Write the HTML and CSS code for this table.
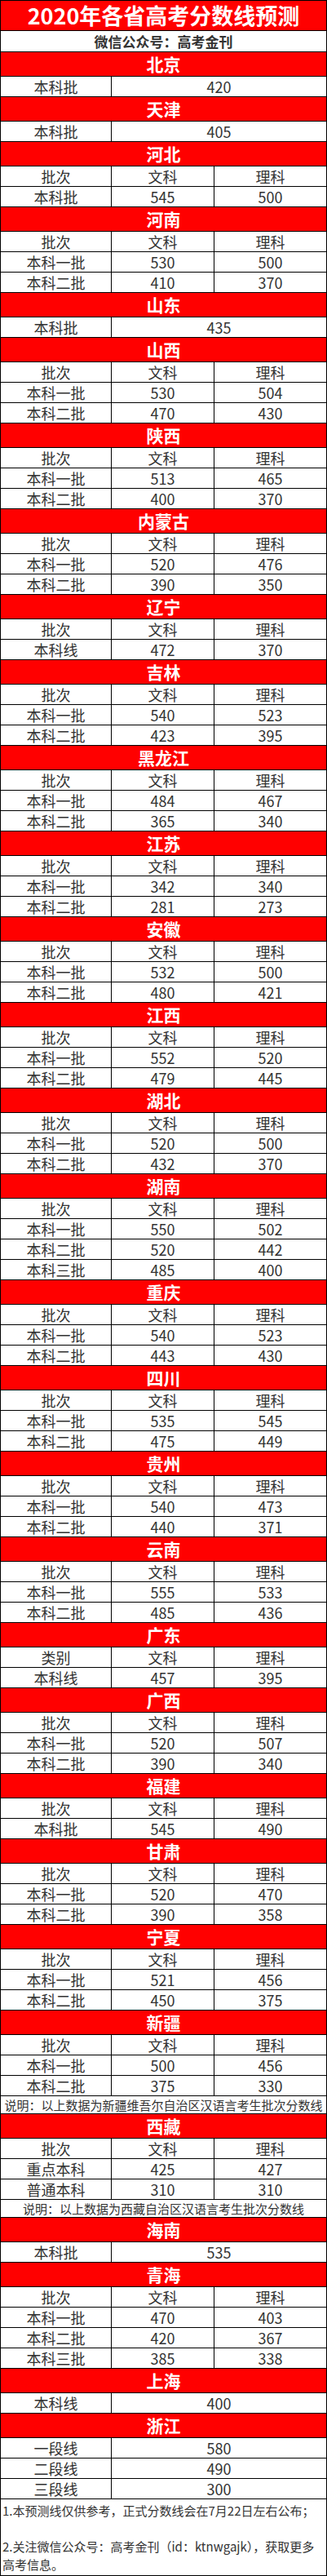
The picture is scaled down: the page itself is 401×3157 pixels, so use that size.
FILE: index.html
```html
<!DOCTYPE html>
<html lang="zh-CN">
<head>
<meta charset="utf-8">
<title>2020年各省高考分数线预测</title>
<link rel="stylesheet" href="styles.css">
</head>
<body>
<div class="sheet">
  <div class="title">2020年各省高考分数线预测</div>
  <div class="subtitle">微信公众号：高考金刊</div>

  <div class="prov">北京</div>
  <div class="row two"><span>本科批</span><span>420</span></div>

  <div class="prov">天津</div>
  <div class="row two"><span>本科批</span><span>405</span></div>

  <div class="prov">河北</div>
  <div class="row"><span>批次</span><span>文科</span><span>理科</span></div>
  <div class="row"><span>本科批</span><span>545</span><span>500</span></div>

  <div class="prov">河南</div>
  <div class="row"><span>批次</span><span>文科</span><span>理科</span></div>
  <div class="row"><span>本科一批</span><span>530</span><span>500</span></div>
  <div class="row"><span>本科二批</span><span>410</span><span>370</span></div>

  <div class="prov">山东</div>
  <div class="row two"><span>本科批</span><span>435</span></div>

  <div class="prov">山西</div>
  <div class="row"><span>批次</span><span>文科</span><span>理科</span></div>
  <div class="row"><span>本科一批</span><span>530</span><span>504</span></div>
  <div class="row"><span>本科二批</span><span>470</span><span>430</span></div>

  <div class="prov">陕西</div>
  <div class="row"><span>批次</span><span>文科</span><span>理科</span></div>
  <div class="row"><span>本科一批</span><span>513</span><span>465</span></div>
  <div class="row"><span>本科二批</span><span>400</span><span>370</span></div>

  <div class="prov">内蒙古</div>
  <div class="row"><span>批次</span><span>文科</span><span>理科</span></div>
  <div class="row"><span>本科一批</span><span>520</span><span>476</span></div>
  <div class="row"><span>本科二批</span><span>390</span><span>350</span></div>

  <div class="prov">辽宁</div>
  <div class="row"><span>批次</span><span>文科</span><span>理科</span></div>
  <div class="row"><span>本科线</span><span>472</span><span>370</span></div>

  <div class="prov">吉林</div>
  <div class="row"><span>批次</span><span>文科</span><span>理科</span></div>
  <div class="row"><span>本科一批</span><span>540</span><span>523</span></div>
  <div class="row"><span>本科二批</span><span>423</span><span>395</span></div>

  <div class="prov">黑龙江</div>
  <div class="row"><span>批次</span><span>文科</span><span>理科</span></div>
  <div class="row"><span>本科一批</span><span>484</span><span>467</span></div>
  <div class="row"><span>本科二批</span><span>365</span><span>340</span></div>

  <div class="prov">江苏</div>
  <div class="row"><span>批次</span><span>文科</span><span>理科</span></div>
  <div class="row"><span>本科一批</span><span>342</span><span>340</span></div>
  <div class="row"><span>本科二批</span><span>281</span><span>273</span></div>

  <div class="prov">安徽</div>
  <div class="row"><span>批次</span><span>文科</span><span>理科</span></div>
  <div class="row"><span>本科一批</span><span>532</span><span>500</span></div>
  <div class="row"><span>本科二批</span><span>480</span><span>421</span></div>

  <div class="prov">江西</div>
  <div class="row"><span>批次</span><span>文科</span><span>理科</span></div>
  <div class="row"><span>本科一批</span><span>552</span><span>520</span></div>
  <div class="row"><span>本科二批</span><span>479</span><span>445</span></div>

  <div class="prov">湖北</div>
  <div class="row"><span>批次</span><span>文科</span><span>理科</span></div>
  <div class="row"><span>本科一批</span><span>520</span><span>500</span></div>
  <div class="row"><span>本科二批</span><span>432</span><span>370</span></div>

  <div class="prov">湖南</div>
  <div class="row"><span>批次</span><span>文科</span><span>理科</span></div>
  <div class="row"><span>本科一批</span><span>550</span><span>502</span></div>
  <div class="row"><span>本科二批</span><span>520</span><span>442</span></div>
  <div class="row"><span>本科三批</span><span>485</span><span>400</span></div>

  <div class="prov">重庆</div>
  <div class="row"><span>批次</span><span>文科</span><span>理科</span></div>
  <div class="row"><span>本科一批</span><span>540</span><span>523</span></div>
  <div class="row"><span>本科二批</span><span>443</span><span>430</span></div>

  <div class="prov">四川</div>
  <div class="row"><span>批次</span><span>文科</span><span>理科</span></div>
  <div class="row"><span>本科一批</span><span>535</span><span>545</span></div>
  <div class="row"><span>本科二批</span><span>475</span><span>449</span></div>

  <div class="prov">贵州</div>
  <div class="row"><span>批次</span><span>文科</span><span>理科</span></div>
  <div class="row"><span>本科一批</span><span>540</span><span>473</span></div>
  <div class="row"><span>本科二批</span><span>440</span><span>371</span></div>

  <div class="prov">云南</div>
  <div class="row"><span>批次</span><span>文科</span><span>理科</span></div>
  <div class="row"><span>本科一批</span><span>555</span><span>533</span></div>
  <div class="row"><span>本科二批</span><span>485</span><span>436</span></div>

  <div class="prov">广东</div>
  <div class="row"><span>类别</span><span>文科</span><span>理科</span></div>
  <div class="row"><span>本科线</span><span>457</span><span>395</span></div>

  <div class="prov">广西</div>
  <div class="row"><span>批次</span><span>文科</span><span>理科</span></div>
  <div class="row"><span>本科一批</span><span>520</span><span>507</span></div>
  <div class="row"><span>本科二批</span><span>390</span><span>340</span></div>

  <div class="prov">福建</div>
  <div class="row"><span>批次</span><span>文科</span><span>理科</span></div>
  <div class="row"><span>本科批</span><span>545</span><span>490</span></div>

  <div class="prov">甘肃</div>
  <div class="row"><span>批次</span><span>文科</span><span>理科</span></div>
  <div class="row"><span>本科一批</span><span>520</span><span>470</span></div>
  <div class="row"><span>本科二批</span><span>390</span><span>358</span></div>

  <div class="prov">宁夏</div>
  <div class="row"><span>批次</span><span>文科</span><span>理科</span></div>
  <div class="row"><span>本科一批</span><span>521</span><span>456</span></div>
  <div class="row"><span>本科二批</span><span>450</span><span>375</span></div>

  <div class="prov">新疆</div>
  <div class="row"><span>批次</span><span>文科</span><span>理科</span></div>
  <div class="row"><span>本科一批</span><span>500</span><span>456</span></div>
  <div class="row"><span>本科二批</span><span>375</span><span>330</span></div>
  <div class="remark">说明：以上数据为新疆维吾尔自治区汉语言考生批次分数线</div>

  <div class="prov">西藏</div>
  <div class="row"><span>批次</span><span>文科</span><span>理科</span></div>
  <div class="row"><span>重点本科</span><span>425</span><span>427</span></div>
  <div class="row"><span>普通本科</span><span>310</span><span>310</span></div>
  <div class="remark">说明：以上数据为西藏自治区汉语言考生批次分数线</div>

  <div class="prov">海南</div>
  <div class="row two"><span>本科批</span><span>535</span></div>

  <div class="prov">青海</div>
  <div class="row"><span>批次</span><span>文科</span><span>理科</span></div>
  <div class="row"><span>本科一批</span><span>470</span><span>403</span></div>
  <div class="row"><span>本科二批</span><span>420</span><span>367</span></div>
  <div class="row"><span>本科三批</span><span>385</span><span>338</span></div>

  <div class="prov">上海</div>
  <div class="row two"><span>本科线</span><span>400</span></div>

  <div class="prov">浙江</div>
  <div class="row two"><span>一段线</span><span>580</span></div>
  <div class="row two"><span>二段线</span><span>490</span></div>
  <div class="row two"><span>三段线</span><span>300</span></div>

  <div class="footnote">
    <p>1.本预测线仅供参考，正式分数线会在7月22日左右公布；</p>
    <p>2.关注微信公众号：高考金刊（id：ktnwgajk），获取更多高考信息。</p>
  </div>
</div>
</body>
</html>
```

FILE: styles.css
```css
* {
  box-sizing: content-box;
}

html, body {
  margin: 0;
  padding: 0;
  background: #fff;
}

body {
  font-family: "Noto Sans CJK SC", "Microsoft YaHei", sans-serif;
  color: #333;
}

.sheet {
  width: 399px;
  border: 1px solid #000;
}

.title {
  height: 36px;
  line-height: 36px;
  background: #ff0000;
  color: #fff;
  font-size: 27px;
  font-weight: 700;
  text-align: center;
  border-bottom: 1px solid #000;
  white-space: nowrap;
}

.subtitle {
  height: 25px;
  line-height: 25px;
  font-size: 17px;
  font-weight: 700;
  color: #333;
  text-align: center;
  border-bottom: 1px solid #000;
}

.prov {
  height: 29px;
  line-height: 29px;
  background: #ff0000;
  color: #fff;
  font-size: 21px;
  font-weight: 700;
  text-align: center;
  border-bottom: 1px solid #000;
}

.row {
  display: grid;
  grid-template-columns: 135px 126px 138px;
  height: 24px;
  line-height: 24px;
  font-size: 18px;
  text-align: center;
  border-bottom: 1px solid #000;
}

.row.two {
  grid-template-columns: 135px 264px;
}

.row span {
  display: block;
  box-sizing: border-box;
  white-space: nowrap;
}

.row span + span {
  border-left: 1px solid #000;
}

.remark {
  height: 21px;
  line-height: 21px;
  font-size: 15px;
  text-align: center;
  white-space: nowrap;
  border-bottom: 1px solid #000;
}

.footnote {
  height: 88px;
  padding: 3px 1px 2px 2px;
  font-size: 15px;
  line-height: 22px;
}

.footnote p {
  margin: 0;
}

.footnote p + p {
  margin-top: 22px;
}
```
